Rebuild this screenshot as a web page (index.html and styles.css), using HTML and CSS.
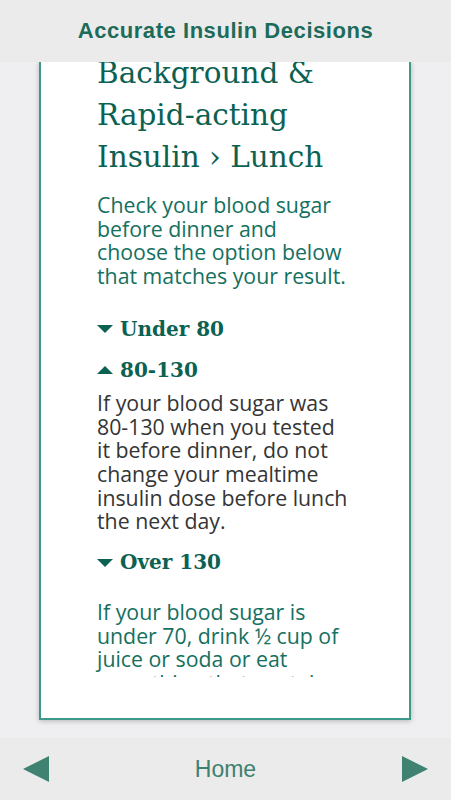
FILE: index.html
```html
<!DOCTYPE html>
<html>
    <head>
        <link rel="stylesheet" href="styles.css">
    </head>
    <body>
        <header class="topbar">
            <h1>Accurate Insulin Decisions</h1>
        </header>

        <main class="stage">
            <div class="card">
                <div class="scroller">
                    <div class="content">
                        <h2 class="title">Background &amp; Rapid-acting Insulin &rsaquo; Lunch</h2>
                        <p class="intro">Check your blood sugar before dinner and choose the option below that matches your result.</p>

                        <div class="option">
                            <h3 class="option-head"><span class="caret down"></span>Under 80</h3>
                        </div>

                        <div class="option open">
                            <h3 class="option-head"><span class="caret up"></span>80-130</h3>
                            <p class="option-body">If your blood sugar was <span class="nowrap">80-130</span> when you tested it before dinner, do not change your mealtime insulin dose before lunch the next day.</p>
                        </div>

                        <div class="option">
                            <h3 class="option-head"><span class="caret down"></span>Over 130</h3>
                        </div>

                        <p class="note">If your blood sugar is under 70, drink &frac12; cup of juice or soda or eat something that contains sugar.</p>
                    </div>
                </div>
            </div>
        </main>

        <footer class="bottombar">
            <button class="nav-arrow" aria-label="Previous">
                <svg width="28" height="28" viewBox="0 0 28 28"><polygon points="27,1 27,27 1,14" fill="#3f8271"/></svg>
            </button>
            <span class="home">Home</span>
            <button class="nav-arrow" aria-label="Next">
                <svg width="28" height="28" viewBox="0 0 28 28"><polygon points="1,1 1,27 27,14" fill="#3f8271"/></svg>
            </button>
        </footer>
    </body>
</html>
```

FILE: styles.css
```css
html, body {
    margin: 0;
    height: 100%;
}

body {
    display: flex;
    flex-direction: column;
    height: 800px;
    background-color: #efeff1;
    font-family: "Liberation Sans", Arial, sans-serif;
    overflow: hidden;
}

.topbar {
    height: 62px;
    flex-shrink: 0;
    background-color: #ebebeb;
    display: flex;
    align-items: center;
    justify-content: center;
    position: relative;
    z-index: 2;
}

.topbar h1 {
    margin: 0;
    font-size: 22px;
    font-weight: bold;
    letter-spacing: 0.55px;
    color: #1d6b5a;
}

.stage {
    flex: 1;
    min-height: 0;
    padding: 0 40px 18px 39px;
    display: flex;
}

.card {
    flex: 1;
    min-height: 0;
    background-color: white;
    border: 2px solid #3d9a8a;
    border-top: none;
    box-shadow: 0 1px 5px rgba(0, 0, 0, 0.25);
    padding-bottom: 41px;
    display: flex;
}

.scroller {
    flex: 1;
    min-height: 0;
    overflow: hidden;
}

/* content is scrolled a little under the top bar */
.content {
    margin-top: -10px;
    padding: 0 56px 0 56px;
}

.title {
    margin: 0 0 15px 0;
    font-family: "DejaVu Serif", serif;
    font-weight: normal;
    font-size: 29.5px;
    line-height: 42px;
    color: #0b6152;
}

.intro,
.option-body,
.note {
    font-family: "Open Sans", sans-serif;
    font-size: 21.3px;
    line-height: 23.7px;
}

.nowrap {
    white-space: nowrap;
}

.intro {
    margin: 0 0 21px 0;
    color: #147060;
}

.option-head {
    margin: 0;
    display: flex;
    align-items: center;
    font-family: "DejaVu Serif", serif;
    font-weight: bold;
    font-size: 20px;
    line-height: 41px;
    color: #0b6152;
}

.caret {
    width: 0;
    height: 0;
    margin-right: 7px;
    border-left: 8px solid transparent;
    border-right: 8px solid transparent;
}

.caret.down {
    border-top: 8px solid #0b6152;
}

.caret.up {
    border-bottom: 8px solid #0b6152;
}

.option-body {
    margin: 0 0 9px 0;
    color: #353535;
}

.note {
    margin: 17px 0 0 0;
    color: #147060;
}

.bottombar {
    height: 62px;
    flex-shrink: 0;
    background-color: #ebebeb;
    display: flex;
    align-items: center;
    justify-content: space-between;
    padding: 0 22px;
}

.nav-arrow {
    background: none;
    border: none;
    padding: 0;
    width: 28px;
    height: 28px;
    cursor: pointer;
}

.home {
    font-size: 23px;
    color: #3e8070;
}
```
